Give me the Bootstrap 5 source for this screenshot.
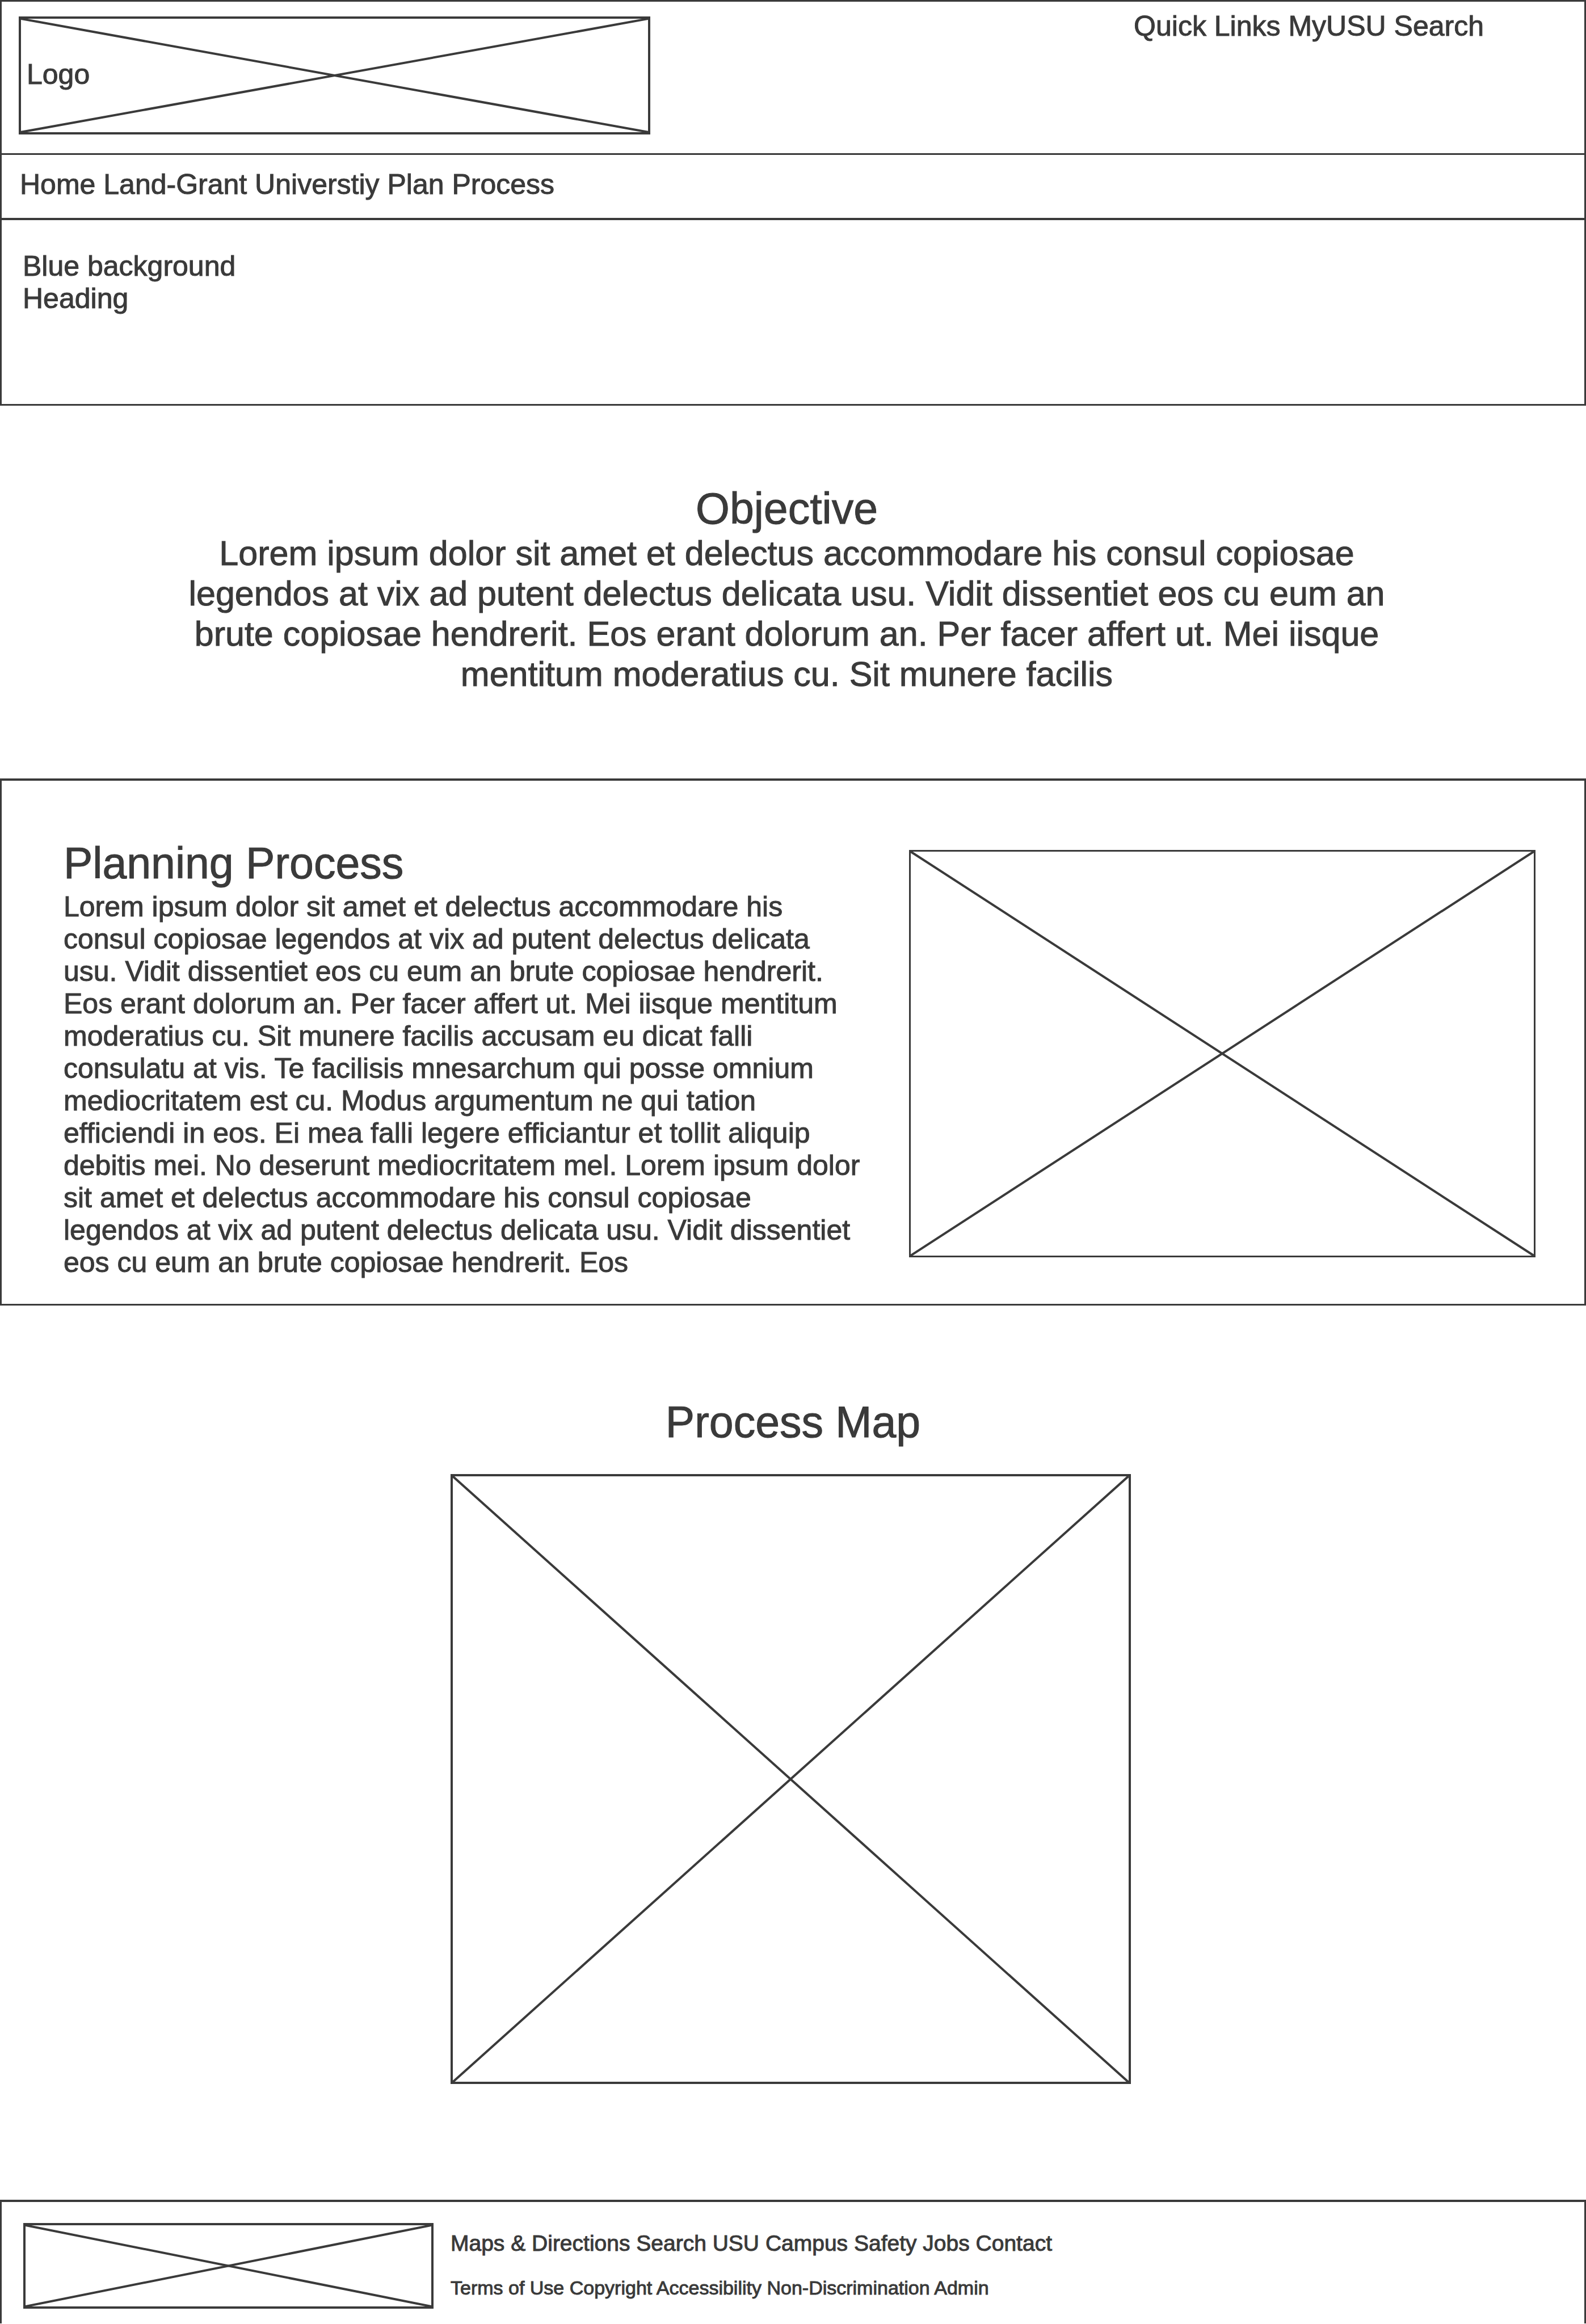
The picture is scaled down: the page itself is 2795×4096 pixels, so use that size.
<!DOCTYPE html>
<html lang="en">
<head>
<meta charset="utf-8">
<meta name="viewport" content="width=device-width, initial-scale=1">
<title>Land-Grant University Plan Process</title>
<link href="https://cdn.jsdelivr.net/npm/bootstrap@5.3.0/dist/css/bootstrap.min.css" rel="stylesheet">
<style>
  :root { --ink: #3a3a3a; }
  body { font-family: "Liberation Sans", Arial, sans-serif; font-size: 50px; line-height: 57px; color: var(--ink); background: #fff; -webkit-text-stroke: 1px var(--ink); }
  a { color: inherit; text-decoration: none; }
  h2 { font-size: 77px; line-height: 88px; font-weight: 400; margin: 0; }
  p { margin: 0; }

  /* Outlined page bands */
  .band { border: 0 solid var(--ink); border-left-width: 3px; border-right-width: 3px; }
  .band-top { border-top-width: 3px; padding: 15px 30px 33px; }
  .band-nav { border-top-width: 3px; padding: 24px 32px 30px; }
  .band-hero { border-top-width: 4px; border-bottom-width: 3px; padding: 53px 37px 157px; }
  .band-planning { border-top-width: 4px; border-bottom-width: 3px; padding: 101px 86px 44px 109px; }
  .band-footer { border-top-width: 4px; padding: 37px 38px 26px; }

  /* Image placeholder: a box with both diagonals */
  .placeholder-box { position: relative; flex: none; border: 4px solid var(--ink); }
  .placeholder-box svg { position: absolute; inset: 0; width: 100%; height: 100%; }
  .placeholder-box line { stroke: var(--ink); stroke-width: 4px; vector-effect: non-scaling-stroke; }
  .box-logo { width: 40.8%; aspect-ratio: 1114 / 208; margin-top: 11px; padding: 0 10px 3px; }
  .box-planning { width: 42.55%; aspect-ratio: 1104 / 718; margin-top: 21px; border-width: 3px; }
  .box-map { width: 43%; aspect-ratio: 1199 / 1076; margin-top: 48px; }
  .box-footer { width: 26.65%; aspect-ratio: 723 / 151; }

  .quick-links { margin-right: 147px; }
  .objective { padding: 137px 308px 148px 286px; }
  .objective p { font-size: 61px; line-height: 71px; }
  .planning-text { width: 54.75%; }
  .planning-text p { margin-top: 5px; }
  .process-map { padding: 161px 0 204px; }
  .footer-links { margin-left: 30px; padding-top: 14px; }
  .footer-main { font-size: 39px; line-height: 44px; }
  .footer-legal { font-size: 34px; line-height: 39px; margin-top: 37px; }
</style>
</head>
<body>
<header>
  <div class="band band-top d-flex align-items-start justify-content-between">
    <a href="#" class="placeholder-box box-logo d-flex align-items-center">
      <svg viewBox="0 0 100 100" preserveAspectRatio="none" aria-hidden="true"><line x1="0" y1="0" x2="100" y2="100"/><line x1="100" y1="0" x2="0" y2="100"/></svg>
      <span>Logo</span>
    </a>
    <nav class="quick-links text-nowrap" aria-label="Utility">
      <a href="#">Quick Links</a> <a href="#">MyUSU</a> <a href="#">Search</a>
    </nav>
  </div>
  <nav class="band band-nav" aria-label="Main">
    <a href="#">Home</a> <a href="#">Land-Grant Universtiy</a> <a href="#">Plan Process</a>
  </nav>
  <div class="band band-hero">
    <p>Blue background<br>Heading</p>
  </div>
</header>

<main>
  <section class="objective text-center">
    <h2>Objective</h2>
    <p>Lorem ipsum dolor sit amet et delectus accommodare his consul copiosae legendos at vix ad putent delectus delicata usu. Vidit dissentiet eos cu eum an brute copiosae hendrerit. Eos erant dolorum an. Per facer affert ut. Mei iisque mentitum moderatius cu. Sit munere facilis</p>
  </section>

  <section class="band band-planning d-flex align-items-start justify-content-between">
    <div class="planning-text">
      <h2>Planning Process</h2>
      <p>Lorem ipsum dolor sit amet et delectus accommodare his consul copiosae legendos at vix ad putent delectus delicata usu. Vidit dissentiet eos cu eum an brute copiosae hendrerit. Eos erant dolorum an. Per facer affert ut. Mei iisque mentitum moderatius cu. Sit munere facilis accusam eu dicat falli consulatu at vis. Te facilisis mnesarchum qui posse omnium mediocritatem est cu. Modus argumentum ne qui tation efficiendi in eos. Ei mea falli legere efficiantur et tollit aliquip debitis mei. No deserunt mediocritatem mel. Lorem ipsum dolor sit amet et delectus accommodare his consul copiosae legendos at vix ad putent delectus delicata usu. Vidit dissentiet eos cu eum an brute copiosae hendrerit. Eos</p>
    </div>
    <div class="placeholder-box box-planning" role="img" aria-label="Planning image">
      <svg viewBox="0 0 100 100" preserveAspectRatio="none" aria-hidden="true"><line x1="0" y1="0" x2="100" y2="100"/><line x1="100" y1="0" x2="0" y2="100"/></svg>
    </div>
  </section>

  <section class="process-map">
    <h2 class="text-center">Process Map</h2>
    <div class="d-flex justify-content-center me-2">
      <div class="placeholder-box box-map" role="img" aria-label="Process map">
        <svg viewBox="0 0 100 100" preserveAspectRatio="none" aria-hidden="true"><line x1="0" y1="0" x2="100" y2="100"/><line x1="100" y1="0" x2="0" y2="100"/></svg>
      </div>
    </div>
  </section>
</main>

<footer class="band band-footer d-flex align-items-start">
  <div class="placeholder-box box-footer" role="img" aria-label="Footer logo">
    <svg viewBox="0 0 100 100" preserveAspectRatio="none" aria-hidden="true"><line x1="0" y1="0" x2="100" y2="100"/><line x1="100" y1="0" x2="0" y2="100"/></svg>
  </div>
  <div class="footer-links">
    <nav class="footer-main" aria-label="Footer">
      <a href="#">Maps &amp; Directions</a> <a href="#">Search USU</a> <a href="#">Campus Safety</a> <a href="#">Jobs</a> <a href="#">Contact</a>
    </nav>
    <nav class="footer-legal" aria-label="Legal">
      <a href="#">Terms of Use</a> <a href="#">Copyright</a> <a href="#">Accessibility</a> <a href="#">Non-Discrimination</a> <a href="#">Admin</a>
    </nav>
  </div>
</footer>
<script src="https://cdn.jsdelivr.net/npm/bootstrap@5.3.0/dist/js/bootstrap.bundle.min.js"></script>
</body>
</html>
